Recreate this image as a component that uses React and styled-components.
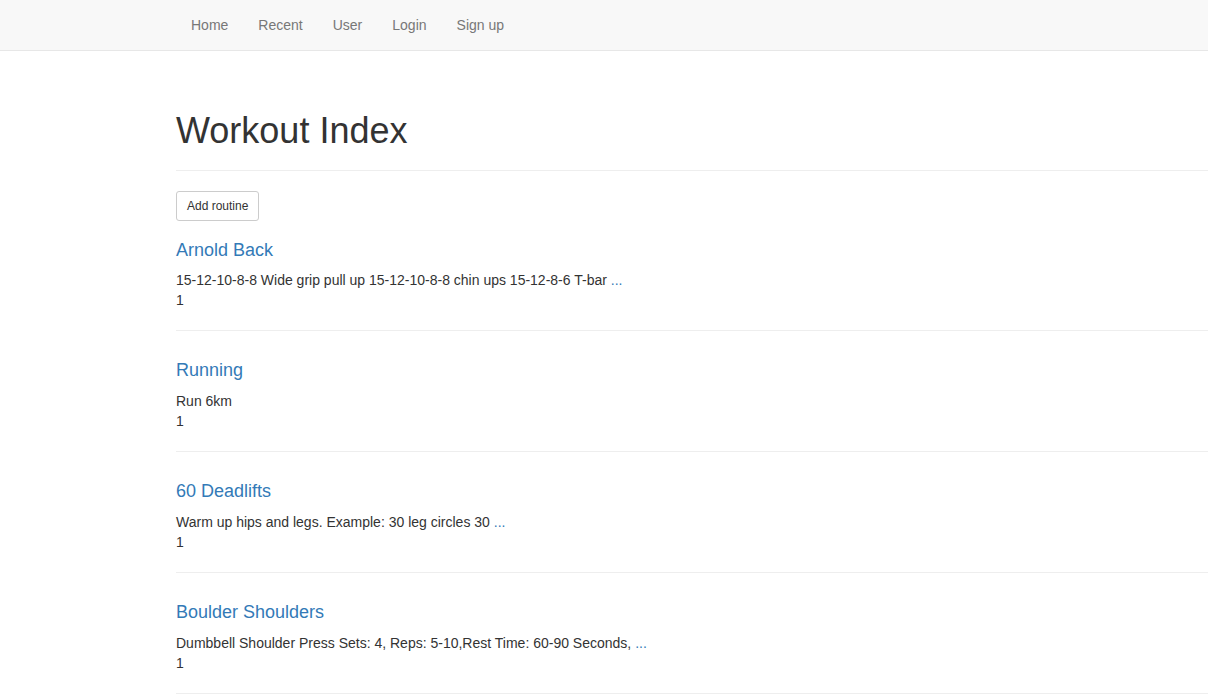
import styled, { createGlobalStyle } from "styled-components";

const GlobalStyle = createGlobalStyle`
  * { box-sizing: border-box; }
  html, body {
    margin: 0;
    padding: 0;
    background: #fff;
  }
  body {
    font-family: "Liberation Sans", Arial, Helvetica, sans-serif;
    font-size: 14px;
    line-height: 1.42857143;
    color: #333;
  }
`;

const Navbar = styled.nav`
  height: 51px;
  background-color: #f8f8f8;
  border-bottom: 1px solid #e7e7e7;
  margin-bottom: 20px;
`;

const NavList = styled.ul`
  display: flex;
  list-style: none;
  margin: 0;
  padding: 0 0 0 176px;
`;

const NavLink = styled.a`
  display: block;
  padding: 15px;
  line-height: 20px;
  color: #777;
  text-decoration: none;
  cursor: pointer;
`;

const Container = styled.div`
  display: flow-root;
  padding-left: 176px;
`;

const PageHeader = styled.div`
  margin: 40px 0 20px;
  padding-bottom: 9px;
  border-bottom: 1px solid #eee;
`;

const Title = styled.h1`
  margin: 0 0 10px;
  font-size: 36px;
  font-weight: 500;
  line-height: 1.1;
  color: #333;
`;

const Button = styled.button`
  display: block;
  padding: 5px 10px;
  font-family: inherit;
  font-size: 12px;
  line-height: 1.5;
  color: #333;
  background-color: #fff;
  border: 1px solid #ccc;
  border-radius: 3px;
  cursor: pointer;
  margin-bottom: 10px;
`;

const Routine = styled.div`
  padding-top: 10px;
`;

const RoutineTitle = styled.h4`
  margin: 0 0 10px;
  font-size: 18px;
  font-weight: 500;
  line-height: 1.1;

  a {
    color: #337ab7;
    text-decoration: none;
  }
`;

const Line = styled.div`
  line-height: 20px;
`;

const More = styled.a`
  color: #337ab7;
  text-decoration: none;
`;

const Rule = styled.hr`
  margin: 20px 0;
  border: 0;
  border-top: 1px solid #eee;
`;

const routines = [
  {
    name: "Arnold Back",
    text: "15-12-10-8-8 Wide grip pull up 15-12-10-8-8 chin ups 15-12-8-6 T-bar",
  },
  { name: "Running", text: "Run 6km", short: true },
  { name: "60 Deadlifts", text: "Warm up hips and legs. Example: 30 leg circles 30" },
  {
    name: "Boulder Shoulders",
    text: "Dumbbell Shoulder Press Sets: 4, Reps: 5-10,Rest Time: 60-90 Seconds,",
  },
];

export default function App() {
  return (
    <>
      <GlobalStyle />
      <Navbar>
        <NavList>
          {["Home", "Recent", "User", "Login", "Sign up"].map((l) => (
            <li key={l}>
              <NavLink>{l}</NavLink>
            </li>
          ))}
        </NavList>
      </Navbar>
      <Container>
        <PageHeader>
          <Title>Workout Index</Title>
        </PageHeader>
        <Button>Add routine</Button>
        {routines.map((r) => (
          <Routine key={r.name}>
            <RoutineTitle>
              <a>{r.name}</a>
            </RoutineTitle>
            <Line>
              {r.text}
              {!r.short && <> <More>...</More></>}
            </Line>
            <Line>1</Line>
            <Rule />
          </Routine>
        ))}
      </Container>
    </>
  );
}
